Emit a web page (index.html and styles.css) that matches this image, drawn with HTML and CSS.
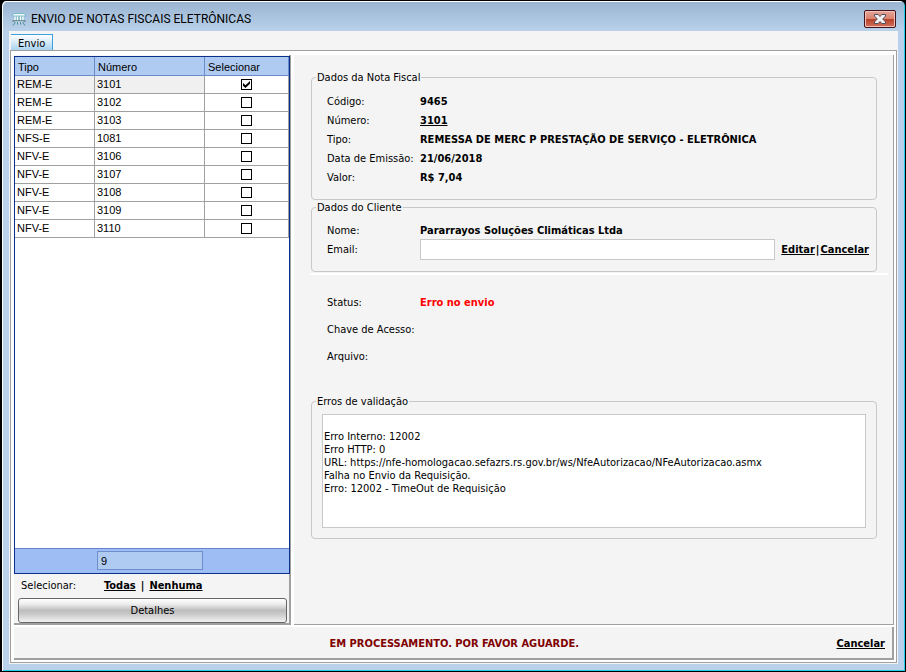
FILE: index.html
```html
<!DOCTYPE html>
<html lang="pt-BR">
<head>
<meta charset="utf-8">
<title>Envio de Notas Fiscais Eletrônicas</title>
<link rel="stylesheet" href="styles.css">
</head>
<body>
<div class="window">
  <header class="titlebar">
    <svg class="app-icon" viewBox="0 0 16 16" aria-hidden="true">
      <path d="M3 2.500h10l2 2.500H1z" fill="#f4fbfb" stroke="#62b3c4" stroke-width=".8"/>
      <path d="M3 5.500h10v4H3z" fill="#7fb4c6"/>
      <path d="M4 5.500v4M6.500 5.500v4M9.500 5.500v4M12 5.500v4" stroke="#fff" stroke-width="1.400"/>
      <path d="M1.500 10h13" stroke="#3f6d78" stroke-width="1.200"/>
      <path d="M3.500 11h9" stroke="#e6f4f4"/>
      <path d="M4.500 11l-2.500 3.500M11.500 11l2.500 3.500M6.500 11v2.500M9.500 11v2.500" stroke="#4d8b98" fill="none"/>
    </svg>
    <h1 class="title">ENVIO DE NOTAS FISCAIS ELETRÔNICAS</h1>
    <button class="close" type="button" aria-label="Fechar">
      <svg viewBox="0 0 14 12" aria-hidden="true">
        <path d="M1.500 1.500h3.700L7 3.500l1.800-2h3.700v1.600L9.700 6l2.800 2.900v1.600H8.800L7 8.500l-1.800 2H1.500V8.900L4.300 6 1.500 3.100z" fill="#f2f2f2" stroke="#4d4d5c"/>
      </svg>
    </button>
  </header>

  <div class="client">
    <nav class="tabs"><button class="tab" type="button">Envio</button></nav>
    <div class="page">
      <main class="panels">
        <section class="list-panel">
          <div class="grid-box">
            <table class="notes">
              <thead><tr><th class="col-type">Tipo</th><th class="col-number">Número</th><th>Selecionar</th></tr></thead>
              <tbody>
                <tr class="current"><td>REM-E</td><td>3101</td><td><input type="checkbox" aria-label="Selecionar 3101" checked></td></tr>
                <tr><td>REM-E</td><td>3102</td><td><input type="checkbox" aria-label="Selecionar 3102"></td></tr>
                <tr><td>REM-E</td><td>3103</td><td><input type="checkbox" aria-label="Selecionar 3103"></td></tr>
                <tr><td>NFS-E</td><td>1081</td><td><input type="checkbox" aria-label="Selecionar 1081"></td></tr>
                <tr><td>NFV-E</td><td>3106</td><td><input type="checkbox" aria-label="Selecionar 3106"></td></tr>
                <tr><td>NFV-E</td><td>3107</td><td><input type="checkbox" aria-label="Selecionar 3107"></td></tr>
                <tr><td>NFV-E</td><td>3108</td><td><input type="checkbox" aria-label="Selecionar 3108"></td></tr>
                <tr><td>NFV-E</td><td>3109</td><td><input type="checkbox" aria-label="Selecionar 3109"></td></tr>
                <tr><td>NFV-E</td><td>3110</td><td><input type="checkbox" aria-label="Selecionar 3110"></td></tr>
              </tbody>
            </table>
            <div class="grid-footer"><input class="count" type="text" value="9" aria-label="Total de notas" readonly></div>
          </div>
          <div class="select-row">
            <span class="select-label">Selecionar:</span>
            <b class="select-links"><a href="#">Todas</a><span>|</span><a href="#">Nenhuma</a></b>
          </div>
          <button class="details" type="button">Detalhes</button>
        </section>

        <section class="detail-panel">
          <fieldset class="group invoice">
            <legend>Dados da Nota Fiscal</legend>
            <dl class="fields">
              <dt>Código:</dt><dd>9465</dd>
              <dt>Número:</dt><dd><a href="#">3101</a></dd>
              <dt>Tipo:</dt><dd>REMESSA DE MERC P PRESTAÇÃO DE SERVIÇO - ELETRÔNICA</dd>
              <dt>Data de Emissão:</dt><dd>21/06/2018</dd>
              <dt>Valor:</dt><dd>R$ 7,04</dd>
            </dl>
          </fieldset>
          <fieldset class="group customer">
            <legend>Dados do Cliente</legend>
            <div class="fields">
              <span>Nome:</span><b>Pararrayos Soluções Climáticas Ltda</b>
              <label for="email">Email:</label>
              <div class="email-row">
                <input class="email" id="email" type="email">
                <b class="email-links"><a href="#">Editar</a><span>|</span><a href="#">Cancelar</a></b>
              </div>
            </div>
          </fieldset>
          <hr class="divider">
          <dl class="fields progress">
            <dt>Status:</dt><dd class="error">Erro no envio</dd>
            <dt>Chave de Acesso:</dt><dd></dd>
            <dt>Arquivo:</dt><dd></dd>
          </dl>
          <fieldset class="group errors">
            <legend>Erros de validação</legend>
            <textarea class="log" aria-label="Erros de validação" readonly>

Erro Interno: 12002
Erro HTTP: 0
URL: https://nfe-homologacao.sefazrs.rs.gov.br/ws/NfeAutorizacao/NFeAutorizacao.asmx
Falha no Envio da Requisição.
Erro: 12002 - TimeOut de Requisição</textarea>
          </fieldset>
        </section>
      </main>
      <footer class="statusbar">
        <b class="message">EM PROCESSAMENTO. POR FAVOR AGUARDE.</b>
        <b><a href="#">Cancelar</a></b>
      </footer>
    </div>
  </div>
</div>
</body>
</html>
```
FILE: styles.css
```css
* { box-sizing: border-box; }

body {
  margin: 0;
  background: #000;
  color: #000;
  font: 11px/13px "DejaVu Sans Condensed", "DejaVu Sans", sans-serif;
}

button, input, textarea { font: inherit; color: inherit; margin: 0; }
a { color: inherit; text-decoration: underline; }
dl, dd { margin: 0; }

.window {
  display: flex;
  flex-direction: column;
  min-height: 100vh;
  padding: 0 7px 7px;
  border: 1px solid #000;
  border-left-width: 2px;
  border-radius: 6px 6px 0 0;
  background: linear-gradient(#99b4d1, #b9d1ea 30px);
  box-shadow: inset 1px 1px #fff, inset -1px -1px #22d0e8;
}

.titlebar {
  display: flex;
  align-items: center;
  height: 30px;
  padding: 6px 2px 0;
}
.app-icon { width: 16px; height: 16px; margin-right: 4px; }
.title {
  flex: 1;
  margin: 0;
  font: 12px/16px Roboto, "Noto Sans", sans-serif;
}
.close {
  display: grid;
  place-items: center;
  width: 32px;
  height: 18px;
  padding: 0;
  border: 1px solid #43101c;
  border-radius: 2px;
  background: linear-gradient(#e5a499, #d9826f 48%, #b83f28 50%, #d0705a);
  box-shadow: inset 0 0 0 1px #f0c3ba;
}
.close svg { width: 14px; height: 12px; }

.client {
  flex: 1;
  display: flex;
  flex-direction: column;
  padding: 0 1px 1px;
  background: #f4f4f4;
}
.tabs { display: flex; align-items: flex-end; height: 19px; padding-left: 1px; }
.tab {
  height: 16px;
  padding: 2px 7px 0;
  border: solid #3c9fe0;
  border-width: 1px 1px 0 0;
  background: linear-gradient(#fff, #d9ecf9 45%, #a9d3ef);
}
.page {
  flex: 1;
  display: flex;
  flex-direction: column;
  padding: 4px 2px 2px 3px;
  border: 1px solid #a0a0a0;
  background: #fff;
}
.panels {
  flex: 1;
  display: grid;
  grid-template-columns: 277px 1fr;
  gap: 3px;
  margin-bottom: 2px;
}

.list-panel {
  display: flex;
  flex-direction: column;
  padding-top: 1px;
  border: solid #a0a0a0;
  border-width: 0 2px 2px 0;
  background: #f4f4f4;
}
.grid-box {
  flex: 1;
  display: flex;
  flex-direction: column;
  margin-right: -1px;
  border: 1px solid #0a308c;
  background: #fff;
}
.notes {
  width: 100%;
  table-layout: fixed;
  border-collapse: separate;
  border-spacing: 0;
  font-family: "Liberation Sans", sans-serif;
}
.notes th, .notes td {
  height: 18px;
  padding: 0 2px;
  border: solid #a0a0a0;
  border-width: 0 1px 1px 0;
  text-align: left;
  font-weight: normal;
}
.notes th {
  height: 19px;
  padding: 2px 3px 0;
  border-color: #6a8ccb;
  background: #afcbf1;
}
.col-type { width: 80px; }
.col-number { width: 110px; }
.current td { background: #f0f0f0; }
.notes td:last-child { background: #fff; text-align: center; line-height: 0; }
.notes input {
  appearance: none;
  width: 11px;
  height: 11px;
  border: 1px solid #000;
  background: #fff;
  vertical-align: middle;
}
.notes input:checked::after {
  content: "";
  display: block;
  width: 7px;
  height: 7px;
  margin: 1px;
  background: #000;
  clip-path: polygon(0 29%, 35% 62%, 100% 0, 100% 38%, 35% 100%, 0 67%);
}
.grid-footer {
  height: 25px;
  margin-top: auto;
  padding: 2px 0 0 82px;
  border-top: 1px solid #6585cf;
  background: #9fbdf5;
}
.count {
  display: block;
  width: 106px;
  height: 19px;
  padding: 0 3px;
  border: 1px solid #6d8dcb;
  background: #afcbf1;
  font-family: "Liberation Sans", sans-serif;
}
.select-row { display: flex; padding: 5px 7px; }
.select-label { width: 83px; }
.select-links { display: flex; gap: 5px; }
.details {
  height: 25px;
  margin: 1px 2px 0 4px;
  padding: 0;
  border: 1px solid #666;
  border-radius: 3px;
  background: linear-gradient(#fff, #ededed 22%, #bdbdbd 50%, #c9c9c9 65%, #f2f2f2);
}

.detail-panel {
  padding: 15px 16px 0 17px;
  border: solid #a0a0a0;
  border-width: 0 1px 1px 0;
  background: #f4f4f4;
}
.group {
  min-width: 0;
  margin: 0;
  padding: 8px 7px 0 15px;
  border: 1px solid #c8c8c8;
  border-radius: 4px;
}
.group legend { margin-left: -11px; padding: 1px 1px 0; }
.invoice { height: 130px; }
.customer { height: 72px; padding-top: 7px; }
.fields {
  display: grid;
  grid-template-columns: 93px 1fr;
  grid-auto-rows: 19px;
  align-items: center;
}
.fields dd { font-weight: bold; }
.email-row { display: flex; gap: 6px; align-items: center; }
.email {
  flex: 1;
  min-width: 0;
  height: 21px;
  border: 1px solid #c8c8c8;
  background: #fff;
}
.email-links { display: flex; gap: 1px; }
.divider {
  height: 2px;
  margin: 1px -11px 0 -1px;
  border: 0;
  background: #fff;
}
.progress {
  grid-auto-rows: 27px;
  margin: 14px 0 24px;
  padding-left: 16px;
}
.error { color: #f00; }
.errors { height: 145px; padding: 6px 10px 0; }
.errors legend { margin-left: -6px; }
.log {
  display: block;
  width: 100%;
  height: 114px;
  padding: 2px 1px;
  border: 1px solid #c8c8c8;
  background: #fff;
  resize: none;
}

.statusbar {
  display: flex;
  align-items: center;
  height: 33px;
  padding: 1px 7px 0 0;
  border: solid #a0a0a0;
  border-width: 0 2px 2px 0;
  background: #f4f4f4;
}
.message { flex: 1; padding-left: 58px; text-align: center; color: #800000; }
```
